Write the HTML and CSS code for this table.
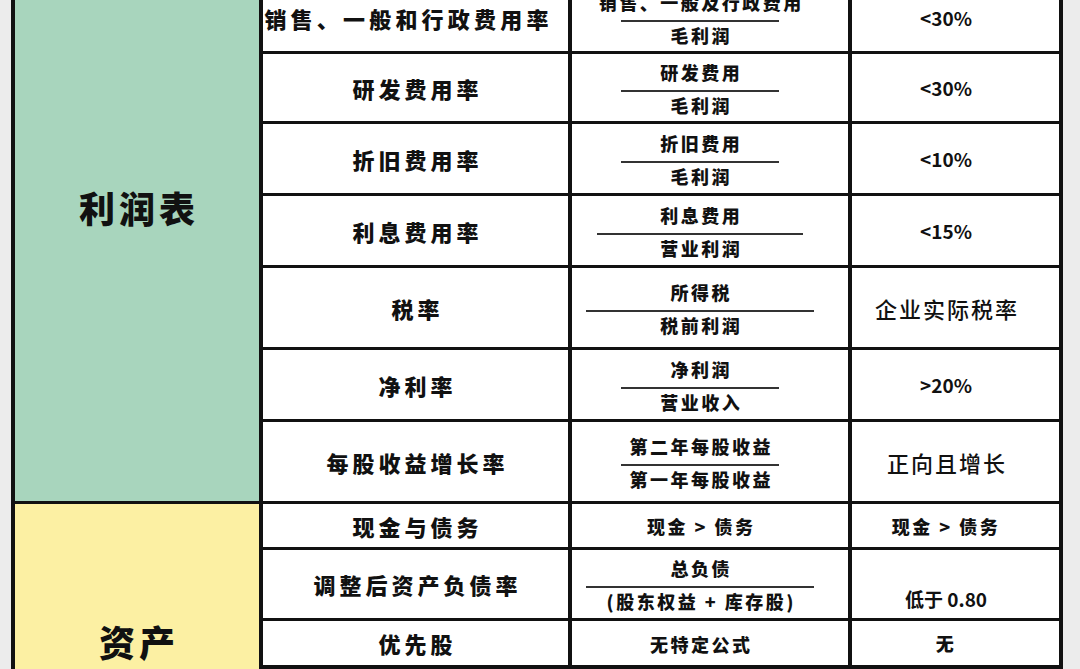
FILE: index.html
```html
<!DOCTYPE html>
<html lang="zh-CN">
<head>
<meta charset="utf-8">
<title>财务指标</title>
<link rel="stylesheet" href="styles.css">
</head>
<body>
<div class="sheet">
  <div class="cat cat-green"><span>利润表</span></div>
  <div class="name name-long">销售、一般和行政费用率</div>
  <div class="frac"><div class="num">销售、一般及行政费用</div><div class="bar w1"></div><div class="den">毛利润</div></div>
  <div class="val">&lt;30%</div>

  <div class="name">研发费用率</div>
  <div class="frac"><div class="num">研发费用</div><div class="bar w1"></div><div class="den">毛利润</div></div>
  <div class="val">&lt;30%</div>

  <div class="name">折旧费用率</div>
  <div class="frac"><div class="num">折旧费用</div><div class="bar w1"></div><div class="den">毛利润</div></div>
  <div class="val">&lt;10%</div>

  <div class="name">利息费用率</div>
  <div class="frac"><div class="num">利息费用</div><div class="bar w2"></div><div class="den">营业利润</div></div>
  <div class="val">&lt;15%</div>

  <div class="name">税率</div>
  <div class="frac"><div class="num">所得税</div><div class="bar w3"></div><div class="den">税前利润</div></div>
  <div class="val val-cn">企业实际税率</div>

  <div class="name">净利率</div>
  <div class="frac"><div class="num">净利润</div><div class="bar w1"></div><div class="den">营业收入</div></div>
  <div class="val">&gt;20%</div>

  <div class="name">每股收益增长率</div>
  <div class="frac"><div class="num">第二年每股收益</div><div class="bar w1"></div><div class="den">第一年每股收益</div></div>
  <div class="val val-cn">正向且增长</div>

  <div class="cat cat-yellow"><span>资产</span></div>
  <div class="name">现金与债务</div>
  <div class="frac"><div class="plain">现金 &gt; 债务</div></div>
  <div class="val val-bold">现金 &gt; 债务</div>

  <div class="name">调整后资产负债率</div>
  <div class="frac"><div class="num">总负债</div><div class="bar w3"></div><div class="den">(股东权益 + 库存股)</div></div>
  <div class="val val-low">低于 0.80</div>

  <div class="name">优先股</div>
  <div class="frac"><div class="plain">无特定公式</div></div>
  <div class="val val-bold">无</div>
</div>
</body>
</html>
```

FILE: styles.css
```css
html, body {
  margin: 0;
  padding: 0;
}
body {
  background: #ececec;
  width: 1080px;
  height: 669px;
  overflow: hidden;
  font-family: "Noto Sans CJK SC", "Noto Sans", sans-serif;
  color: #111;
}
.sheet {
  margin: -20px 0 0 11px;
  width: 1052px;
  box-sizing: border-box;
  background: #111;
  padding: 4px;
  display: grid;
  grid-template-columns: 244px 305px 276px 207px;
  grid-template-rows: 67px 67px 69px 69px 79px 69px 79px 43px 68px 44px 60px;
  column-gap: 4px;
  row-gap: 3px;
}
.cat {
  display: flex;
  justify-content: center;
  align-items: flex-start;
  font-size: 36px;
  font-weight: 900;
  letter-spacing: 4px;
  line-height: 44px;
}
.cat span {
  padding-left: 4px;
}
.cat-green {
  grid-row: span 7;
  background: #a8d5bd;
  padding-top: 201px;
}
.cat-yellow {
  grid-row: span 4;
  background: #fcf0a3;
  padding-top: 115px;
}
.name, .frac, .val {
  background: #fff;
  display: flex;
  align-items: center;
  justify-content: center;
}
.name {
  font-size: 22px;
  font-weight: 900;
  letter-spacing: 4px;
  padding-left: 4px;
}
.name-long {
  letter-spacing: 4.2px;
  padding-left: 0;
  padding-right: 14px;
}
.frac {
  flex-direction: column;
  padding-right: 20px;
  padding-top: 1px;
  font-size: 18px;
  font-weight: 900;
  letter-spacing: 2.5px;
}
.num, .den {
  line-height: 24px;
  height: 24px;
  white-space: nowrap;
  padding-left: 2.5px;
}
.bar {
  height: 2px;
  background: #333;
  margin: 6px 0 1px;
}
.w1 { width: 158px; }
.w2 { width: 206px; }
.w3 { width: 228px; }
.plain {
  line-height: 24px;
  padding-left: 2.5px;
}
.val {
  padding-right: 19px;
  font-size: 19px;
  font-weight: 700;
}
.val-cn {
  font-size: 22px;
  font-weight: 500;
  letter-spacing: 2px;
  padding-left: 2px;
}
.val-bold {
  font-size: 18px;
  font-weight: 900;
  letter-spacing: 2.5px;
}
.val-low {
  align-items: flex-start;
  padding-top: 37px;
  font-size: 19px;
  font-weight: 700;
  line-height: 24px;
}
```
